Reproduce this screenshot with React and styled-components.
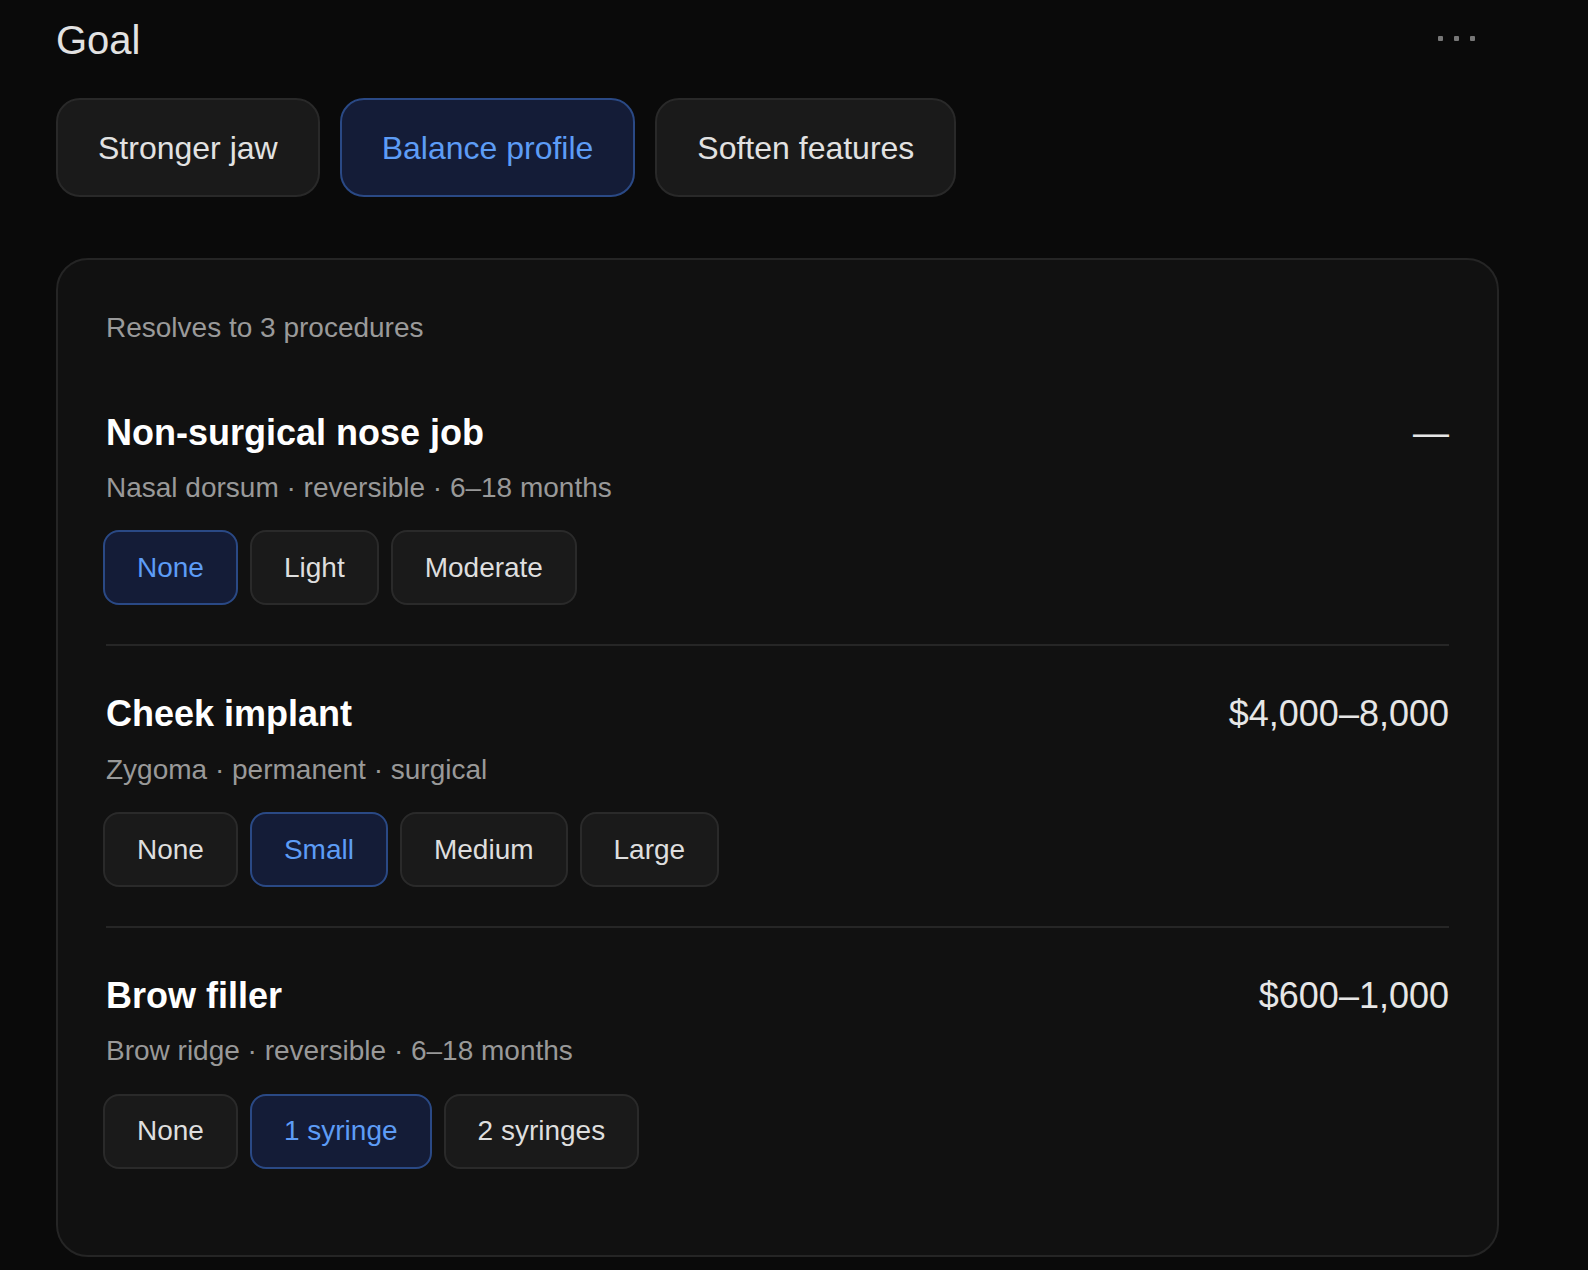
import React, { useState } from "react";
import styled, { createGlobalStyle, css } from "styled-components";

const GlobalStyle = createGlobalStyle`
    html, body {
        margin: 0;
        padding: 0;
        background: #0a0a0a;
    }

    body {
        font-family: "Liberation Sans", Arial, Helvetica, sans-serif;
        color: #e4e4e4;
    }

    * {
        box-sizing: border-box;
    }
`;

const Page = styled.div`
    padding: 16px 89px 40px 56px;
`;

const Header = styled.header`
    display: flex;
    align-items: center;
    justify-content: space-between;
    height: 48px;
`;

const Heading = styled.h1`
    margin: 0;
    font-size: 40px;
    font-weight: 400;
    line-height: 48px;
    color: #e2e2e2;
`;

const MoreButton = styled.button`
    display: flex;
    gap: 11px;
    margin: 0 24px 4px 0;
    padding: 0;
    border: none;
    background: none;
    cursor: pointer;

    span {
        width: 5px;
        height: 5px;
        border-radius: 1px;
        background: #777;
    }
`;

const GoalRow = styled.div`
    display: flex;
    gap: 20px;
    margin-top: 34px;
`;

const activeChip = css`
    background: #141c37;
    border-color: #2a4985;
    color: #5d9cf6;
`;

const GoalChip = styled.button`
    height: 99px;
    padding: 2px 40px 0;
    border: 2px solid #292929;
    border-radius: 24px;
    background: #1a1a1a;
    color: #e2e2e2;
    font-family: inherit;
    font-size: 32px;
    cursor: pointer;
    ${(p) => p.$active && activeChip}
`;

const Card = styled.section`
    margin-top: 61px;
    padding: 51px 48px 47px;
    border: 2px solid #252525;
    border-radius: 32px;
    background: #111111;
`;

const Summary = styled.p`
    margin: 0 0 20px;
    font-size: 28px;
    line-height: 1.2;
    color: #9a9a9a;
`;

const Procedure = styled.div`
    padding: 46px 0 39px;
    border-bottom: 2px solid #262626;

    &:last-child {
        border-bottom: none;
    }
`;

const TitleRow = styled.div`
    display: flex;
    align-items: baseline;
    justify-content: space-between;
`;

const Title = styled.h2`
    margin: 0;
    font-size: 36px;
    font-weight: 700;
    line-height: 1.2;
    color: #ffffff;
`;

const Price = styled.span`
    font-size: 36px;
    line-height: 1.2;
    color: #e6e6e6;
`;

const Meta = styled.div`
    margin-top: 17px;
    font-size: 28px;
    line-height: 1.2;
    color: #999999;
`;

const Options = styled.div`
    display: flex;
    gap: 12px;
    margin: 26px 0 0 -3px;
`;

const OptionChip = styled.button`
    height: 75px;
    padding: 0 32px;
    border: 2px solid #2a2a2a;
    border-radius: 16px;
    background: #1a1a1a;
    color: #dedede;
    font-family: inherit;
    font-size: 28px;
    cursor: pointer;
    ${(p) => p.$active && activeChip}
`;

const goals = ["Stronger jaw", "Balance profile", "Soften features"];

const procedures = [
    {
        name: "Non-surgical nose job",
        meta: ["Nasal dorsum", "reversible", "6–18 months"],
        price: "—",
        options: ["None", "Light", "Moderate"],
        selected: 0,
    },
    {
        name: "Cheek implant",
        meta: ["Zygoma", "permanent", "surgical"],
        price: "$4,000–8,000",
        options: ["None", "Small", "Medium", "Large"],
        selected: 1,
    },
    {
        name: "Brow filler",
        meta: ["Brow ridge", "reversible", "6–18 months"],
        price: "$600–1,000",
        options: ["None", "1 syringe", "2 syringes"],
        selected: 1,
    },
];

const App = () => {
    const [goal, setGoal] = useState("Balance profile");
    const [picks, setPicks] = useState(procedures.map((p) => p.selected));

    const pick = (i, j) => setPicks((prev) => prev.map((v, k) => (k === i ? j : v)));

    return (
        <Page>
            <GlobalStyle />
            <Header>
                <Heading>Goal</Heading>
                <MoreButton aria-label="More">
                    <span />
                    <span />
                    <span />
                </MoreButton>
            </Header>

            <GoalRow>
                {goals.map((g) => (
                    <GoalChip key={g} $active={g === goal} onClick={() => setGoal(g)}>
                        {g}
                    </GoalChip>
                ))}
            </GoalRow>

            <Card>
                <Summary>Resolves to {procedures.length} procedures</Summary>
                {procedures.map((p, i) => (
                    <Procedure key={p.name}>
                        <TitleRow>
                            <Title>{p.name}</Title>
                            <Price>{p.price}</Price>
                        </TitleRow>
                        <Meta>{p.meta.join(" · ")}</Meta>
                        <Options>
                            {p.options.map((o, j) => (
                                <OptionChip key={o} $active={picks[i] === j} onClick={() => pick(i, j)}>
                                    {o}
                                </OptionChip>
                            ))}
                        </Options>
                    </Procedure>
                ))}
            </Card>
        </Page>
    );
};

export default App;
